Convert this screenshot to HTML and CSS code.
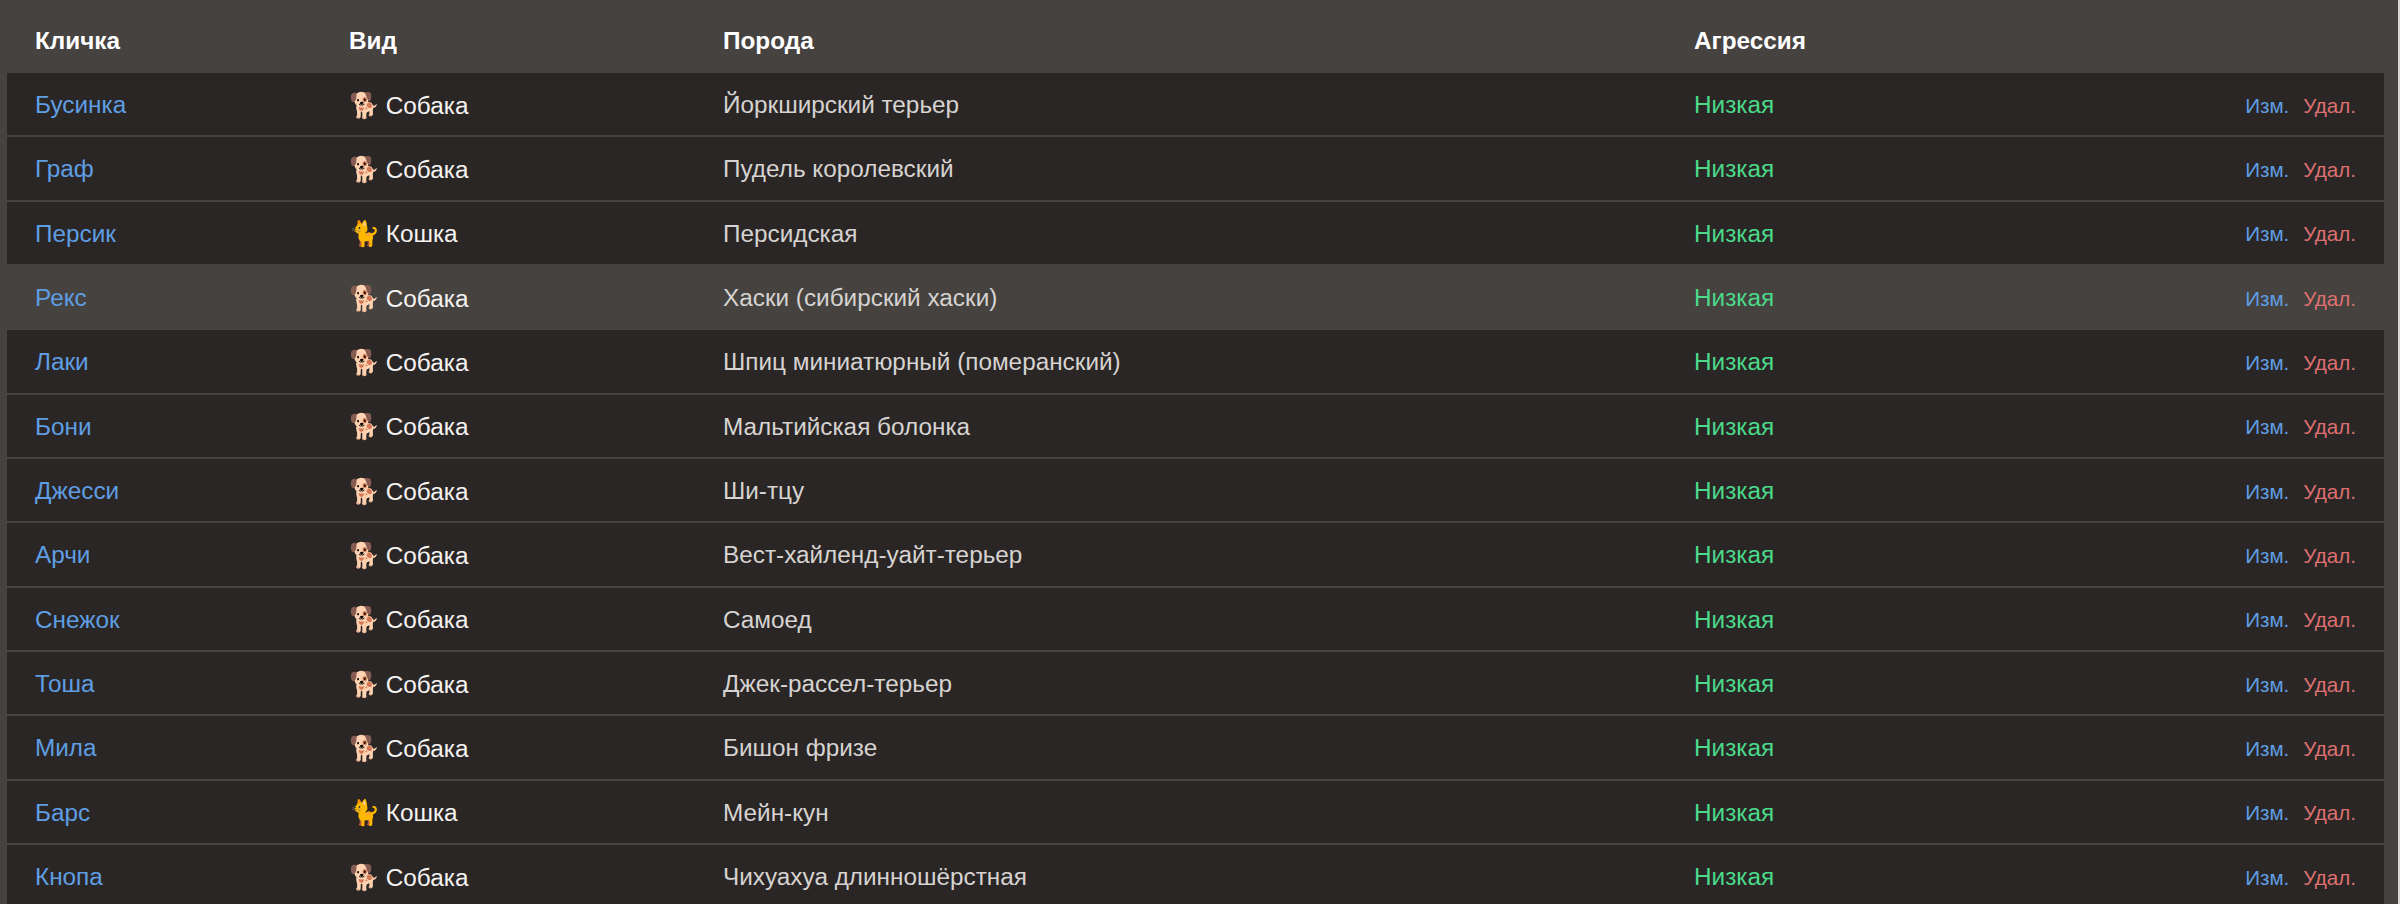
FILE: index.html
```html
<!DOCTYPE html>
<html lang="ru">
<head>
<meta charset="utf-8">
<title>Питомцы</title>
<link rel="stylesheet" href="styles.css">
</head>
<body>
<div class="panel">
<table class="pets">
<colgroup><col class="c-name"><col class="c-kind"><col class="c-breed"><col class="c-aggr"><col class="c-act"></colgroup>
<thead><tr><th>Кличка</th><th>Вид</th><th>Порода</th><th>Агрессия</th><th></th></tr></thead>
<tbody>
<tr><td><a class="name">Бусинка</a></td><td class="kind"><span class="emoji">🐕</span> Собака</td><td class="breed">Йоркширский терьер</td><td class="low">Низкая</td><td class="act"><a class="edit">Изм.</a><a class="del">Удал.</a></td></tr>
<tr><td><a class="name">Граф</a></td><td class="kind"><span class="emoji">🐕</span> Собака</td><td class="breed">Пудель королевский</td><td class="low">Низкая</td><td class="act"><a class="edit">Изм.</a><a class="del">Удал.</a></td></tr>
<tr><td><a class="name">Персик</a></td><td class="kind"><span class="emoji">🐈</span> Кошка</td><td class="breed">Персидская</td><td class="low">Низкая</td><td class="act"><a class="edit">Изм.</a><a class="del">Удал.</a></td></tr>
<tr class="hover"><td><a class="name">Рекс</a></td><td class="kind"><span class="emoji">🐕</span> Собака</td><td class="breed">Хаски (сибирский хаски)</td><td class="low">Низкая</td><td class="act"><a class="edit">Изм.</a><a class="del">Удал.</a></td></tr>
<tr><td><a class="name">Лаки</a></td><td class="kind"><span class="emoji">🐕</span> Собака</td><td class="breed">Шпиц миниатюрный (померанский)</td><td class="low">Низкая</td><td class="act"><a class="edit">Изм.</a><a class="del">Удал.</a></td></tr>
<tr><td><a class="name">Бони</a></td><td class="kind"><span class="emoji">🐕</span> Собака</td><td class="breed">Мальтийская болонка</td><td class="low">Низкая</td><td class="act"><a class="edit">Изм.</a><a class="del">Удал.</a></td></tr>
<tr><td><a class="name">Джесси</a></td><td class="kind"><span class="emoji">🐕</span> Собака</td><td class="breed">Ши-тцу</td><td class="low">Низкая</td><td class="act"><a class="edit">Изм.</a><a class="del">Удал.</a></td></tr>
<tr><td><a class="name">Арчи</a></td><td class="kind"><span class="emoji">🐕</span> Собака</td><td class="breed">Вест-хайленд-уайт-терьер</td><td class="low">Низкая</td><td class="act"><a class="edit">Изм.</a><a class="del">Удал.</a></td></tr>
<tr><td><a class="name">Снежок</a></td><td class="kind"><span class="emoji">🐕</span> Собака</td><td class="breed">Самоед</td><td class="low">Низкая</td><td class="act"><a class="edit">Изм.</a><a class="del">Удал.</a></td></tr>
<tr><td><a class="name">Тоша</a></td><td class="kind"><span class="emoji">🐕</span> Собака</td><td class="breed">Джек-рассел-терьер</td><td class="low">Низкая</td><td class="act"><a class="edit">Изм.</a><a class="del">Удал.</a></td></tr>
<tr><td><a class="name">Мила</a></td><td class="kind"><span class="emoji">🐕</span> Собака</td><td class="breed">Бишон фризе</td><td class="low">Низкая</td><td class="act"><a class="edit">Изм.</a><a class="del">Удал.</a></td></tr>
<tr><td><a class="name">Барс</a></td><td class="kind"><span class="emoji">🐈</span> Кошка</td><td class="breed">Мейн-кун</td><td class="low">Низкая</td><td class="act"><a class="edit">Изм.</a><a class="del">Удал.</a></td></tr>
<tr><td><a class="name">Кнопа</a></td><td class="kind"><span class="emoji">🐕</span> Собака</td><td class="breed">Чихуахуа длинношёрстная</td><td class="low">Низкая</td><td class="act"><a class="edit">Изм.</a><a class="del">Удал.</a></td></tr>
</tbody>
</table>
</div>
</body>
</html>
```
FILE: styles.css
```css
html, body { margin: 0; height: 100%; overflow: hidden; }
body { background: #45423f; font-family: "Liberation Sans", Arial, sans-serif; font-size: 24.32px; box-sizing: border-box; border-right: 2px solid #d8d8d6; }
.panel { padding: 0 14px 0 7px; }
.pets { width: 2377px; border-collapse: separate; border-spacing: 0; table-layout: fixed; }
.c-name { width: 314px; }
.c-kind { width: 374px; }
.c-breed { width: 971px; }
.c-aggr { width: 400px; }
th { height: 73px; padding: 8px 28px 0; text-align: left; font-weight: 700; color: #fff; vertical-align: middle; box-sizing: border-box; }
td { height: 64.33px; padding: 2px 28px 0; background: #2a2625; border-bottom: 2px solid #45423f; box-sizing: border-box; vertical-align: middle; white-space: nowrap; }
.hover td { background: #45423f; }
.name { color: #5f9ee3; }
.emoji { font-size: 25px; margin-right: -1px; }
.kind { color: #f5f3f1; }
.breed { color: #d6d3d1; }
.low { color: #4bd98a; }
.act { text-align: right; font-size: 20.6px; padding-top: 3px; }
.edit { color: #5f9ee3; margin-right: 14px; }
.del { color: #df7070; }
```
